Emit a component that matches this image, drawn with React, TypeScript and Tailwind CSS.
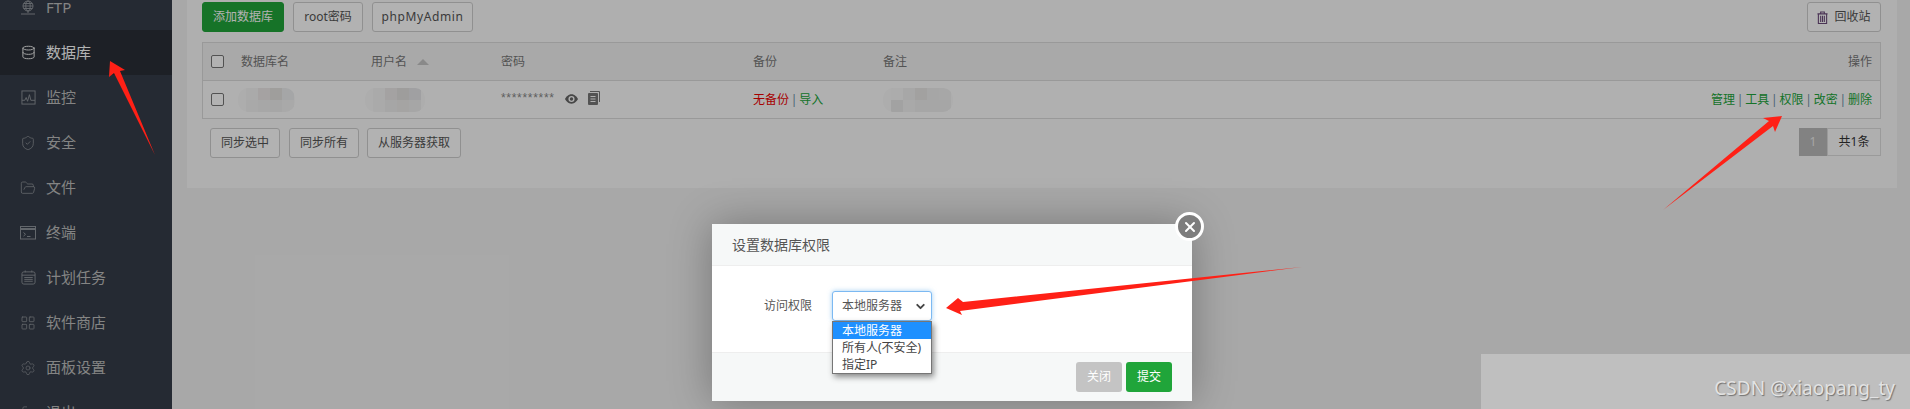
import { Database, ShieldCheck, FolderOpen, LayoutGrid, Settings, ChevronDown, X, LogOut } from "lucide-react";

function FtpIcon() {
  return (
    <svg viewBox="0 0 16 16" className="w-[16px] h-[16px]" fill="none" stroke="currentColor" strokeWidth="1">
      <circle cx="8" cy="6" r="5" />
      <ellipse cx="8" cy="6" rx="2.2" ry="5" />
      <path d="M3 6h10M3.8 3.500h8.400M3.800 8.500h8.400M8 11v2M1 14h14" />
    </svg>
  );
}
function MonitorIcon() {
  return (
    <svg viewBox="0 0 16 16" className="w-[15px] h-[15px]" fill="none" stroke="currentColor" strokeWidth="1">
      <rect x="1" y="1" width="14" height="14" />
      <path d="M1 11h3l1.500-3 1.500 4 2-7 1.500 6H15" />
    </svg>
  );
}
function TerminalIcon() {
  return (
    <svg viewBox="0 0 16 14" className="w-[16px] h-[14px]" fill="none" stroke="currentColor" strokeWidth="1">
      <rect x="0.5" y="0.5" width="15" height="12.5" />
      <path d="M1 3h14" strokeWidth="2" />
      <path d="M3.500 6.500l2 1.800-2 1.800M7 10.500h3.500" />
    </svg>
  );
}
function CalendarIcon() {
  return (
    <svg viewBox="0 0 16 16" className="w-[15px] h-[15px]" fill="none" stroke="currentColor" strokeWidth="1">
      <rect x="1" y="2" width="14" height="13" rx="2" />
      <path d="M1 5.500h14M4.500 0.500v2M11.500 0.500v2M3.500 8h9M3.500 10h9M3.500 12h9" />
    </svg>
  );
}

const nav = [
  { label: "FTP", icon: <FtpIcon /> },
  { label: "数据库", icon: <Database size={15} strokeWidth={1.6} />, active: true },
  { label: "监控", icon: <MonitorIcon /> },
  { label: "安全", icon: <ShieldCheck size={16} strokeWidth={1.2} /> },
  { label: "文件", icon: <FolderOpen size={16} strokeWidth={1.2} /> },
  { label: "终端", icon: <TerminalIcon /> },
  { label: "计划任务", icon: <CalendarIcon /> },
  { label: "软件商店", icon: <LayoutGrid size={16} strokeWidth={1.2} /> },
  { label: "面板设置", icon: <Settings size={16} strokeWidth={1} /> },
  { label: "退出", icon: <LogOut size={15} strokeWidth={1.2} /> },
];

function Btn({ children, className = "" }: { children: React.ReactNode; className?: string }) {
  return (
    <button className={`h-[30px] rounded-[3px] border border-[#cfcfcf] bg-white text-[12px] text-[#555] flex items-center justify-center ${className}`}>
      {children}
    </button>
  );
}

function Checkbox() {
  return <span className="block w-[13px] h-[13px] rounded-[2px] border border-[#767676] bg-white" />;
}

function Mosaic({ width, cells }: { width: number; cells: string[] }) {
  return (
    <div className="h-[24px] rounded-[10px] overflow-hidden bg-[#f8f8f8] blur-[0.5px] flex flex-wrap pl-[8px]" style={{ width }}>
      {cells.map((c, i) => (
        <span key={i} className="w-[12px] h-[12px]" style={{ background: c }} />
      ))}
    </div>
  );
}

function Sep() {
  return <span className="text-[#6a8ea8] mx-[1.8px]">|</span>;
}

export default function App() {
  return (
    <div
      className="relative w-[1910px] h-[409px] overflow-hidden flex bg-[#f1f1f1]"
      style={{ fontFamily: '"Noto Sans", "Noto Sans CJK SC", sans-serif' }}
    >
      {/* sidebar */}
      <aside className="w-[172px] shrink-0 h-full bg-[#363d49] overflow-hidden">
        <div className="-mt-[15px]">
          {nav.map((n) => (
            <div
              key={n.label}
              className={`h-[45px] flex items-center pl-[20px] text-[15px] ${n.active ? "bg-[#2a2f37] text-white" : "text-[#bdbdbd]"}`}
            >
              <span className={`w-[16px] flex justify-center ${n.active ? "text-[#e8e8e8]" : "text-[#8f949b]"}`}>{n.icon}</span>
              <span className="ml-[10px]">{n.label}</span>
            </div>
          ))}
        </div>
      </aside>

      {/* main */}
      <main className="flex-1 pl-[15px] pr-[13px]">
        <section className="h-[188px] bg-[#fbfbfb] pt-[2px] px-[15px] pr-[16px]">
          <div className="flex items-center h-[30px]">
            <Btn className="w-[82px] !bg-[#20a53a] !border-[#20a53a] !text-white">添加数据库</Btn>
            <Btn className="w-[70px] ml-[9px]">root密码</Btn>
            <Btn className="w-[101px] ml-[9px] tracking-[0.6px]">phpMyAdmin</Btn>
            <Btn className="w-[74px] ml-auto">
              <svg viewBox="0 0 12 14" className="w-[11px] h-[13px] mr-[6px]" fill="none" stroke="#6b4a7a" strokeWidth="1.2">
                <path d="M0.500 3h11M4 3V1h4v2M1.500 3v10.500h9V3M4 5v7M6 5v7M8 5v7" />
              </svg>
              回收站
            </Btn>
          </div>

          <div className="mt-[10px] border border-[#dcdcdc] text-[12px]">
            <div className="h-[38px] bg-[#f3f3f3] border-b border-[#dcdcdc] flex items-center text-[#777]">
              <div className="w-[38px] pl-[8px]"><Checkbox /></div>
              <div className="w-[130px]">数据库名</div>
              <div className="w-[130px] flex items-center">
                用户名
                <span className="ml-[10px] w-0 h-0 border-x-[6px] border-x-transparent border-b-[6px] border-b-[#c4c4c4]" />
              </div>
              <div className="w-[252px]">密码</div>
              <div className="w-[130px]">备份</div>
              <div className="w-[100px]">备注</div>
              <div className="flex-1 text-right pr-[8px]">操作</div>
            </div>
            <div className="h-[37px] bg-[#fdfdfd] flex items-center text-[#666]">
              <div className="w-[38px] pl-[8px]"><Checkbox /></div>
              <div className="w-[133px] -ml-[3px]">
                <Mosaic width={57} cells={["#f4f4f4", "#ece9e9", "#e4e2e0", "#eceef0", "#f2f2f2", "#f0f0f0", "#eee", "#f2f2f2"]} />
              </div>
              <div className="w-[136px] -ml-[6px]">
                <Mosaic width={60} cells={["#f4f4f4", "#ebe9e8", "#e3e1e0", "#e5e6e9", "#f4f4f4", "#eee", "#ecebea", "#eee"]} />
              </div>
              <div className="w-[252px] flex items-center">
                <span className="text-[#888] tracking-[0.7px] -mt-[3px]" style={{ fontFamily: '"Liberation Sans", sans-serif' }}>**********</span>
                <svg viewBox="0 0 14 10" className="ml-[10px] w-[13px] h-[10px] -mt-[2px]" fill="#666">
                  <path fillRule="evenodd" d="M7 0C3.500 0 1 3 0 5c1 2 3.500 5 7 5s6-3 7-5c-1-2-3.500-5-7-5zm0 8.300A3.300 3.300 0 1 1 7 1.700a3.300 3.300 0 0 1 0 6.600z" />
                  <circle cx="7" cy="5" r="1.800" />
                </svg>
                <svg viewBox="0 0 12 14" className="ml-[10px] w-[12px] h-[14px] -mt-[3px]" fill="#777">
                  <path fillRule="evenodd" d="M2 0h9a1 1 0 0 1 1 1v10h-1V1H2zM1 2h8a1 1 0 0 1 1 1v10a1 1 0 0 1-1 1H1a1 1 0 0 1-1-1V3a1 1 0 0 1 1-1zm1.500 3v1h5V5zm0 2.500v1h5v-1zm0 2.500v1h5v-1z" />
                </svg>
              </div>
              <div className="w-[130px]">
                <span className="text-[#ee0000]">无备份</span>
                <Sep />
                <span className="text-[#20a53a]">导入</span>
              </div>
              <div className="w-[100px]">
                <Mosaic width={70} cells={["#f6f6f6", "#f0f0f0", "#e9e7e6", "#eee", "#f0f0f0", "#e8e8e8", "#f3f3f3", "#eee", "#eee", "#eee", "#f0f0f0"]} />
              </div>
              <div className="flex-1 text-right pr-[8px] text-[#20a53a]">
                管理<Sep />工具<Sep />权限<Sep />改密<Sep />删除
              </div>
            </div>
          </div>

          <div className="mt-[9px] flex items-start pl-[8px]">
            <Btn className="w-[70px]">同步选中</Btn>
            <Btn className="w-[70px] ml-[9px]">同步所有</Btn>
            <Btn className="w-[94px] ml-[8px]">从服务器获取</Btn>
            <div className="ml-auto flex text-[12px] h-[28px]">
              <span className="w-[28px] bg-[#bababa] text-[#eee] flex items-center justify-center">1</span>
              <span className="w-[54px] border border-[#ddd] text-[#333] flex items-center justify-center">共1条</span>
            </div>
          </div>
        </section>
      </main>

      {/* mask */}
      <div className="absolute inset-0 bg-black/30" />

      {/* dialog */}
      <div className="absolute left-[712px] top-[224px] w-[480px] h-[177px] bg-white shadow-[0_0_40px_rgba(0,0,0,0.3)] flex flex-col">
        <div className="h-[42px] shrink-0 bg-[#f6f8f8] border-b border-[#eee] flex items-center pl-[20px] text-[14px] text-[#555]">
          设置数据库权限
        </div>
        <div className="flex-1 min-h-0 flex items-start pt-[25px] text-[12px] text-[#555]">
          <div className="w-[100px] h-[30px] text-right leading-[30px]">访问权限</div>
          <div className="ml-[20px] w-[100px] relative z-10">
            <div className="h-[30px] border border-[#7cb9f2] rounded-[3px] bg-white shadow-[0_0_5px_rgba(102,175,233,0.6)] flex items-center pl-[9px] pr-[4px] justify-between">
              本地服务器
              <ChevronDown size={13} strokeWidth={3.5} className="text-[#444]" />
            </div>
            <div className="absolute left-0 top-[30px] w-full border border-[#767676] bg-white text-[#444] leading-[17px] shadow-[2px_3px_6px_rgba(0,0,0,0.45)]">
              <div className="bg-[#1e90ff] text-white pl-[9px]">本地服务器</div>
              <div className="pl-[9px]">所有人(不安全)</div>
              <div className="pl-[9px]">指定IP</div>
            </div>
          </div>
        </div>
        <div className="h-[49px] shrink-0 bg-[#f6f8f8] border-t border-[#eee] flex items-center justify-end pr-[20px] gap-[4px] text-[12px] text-white">
          <button className="w-[46px] h-[30px] rounded-[3px] bg-[#c4c4c4]">关闭</button>
          <button className="w-[46px] h-[30px] rounded-[3px] bg-[#20a53a]">提交</button>
        </div>
        <button className="absolute -right-[12px] -top-[12px] w-[29px] h-[29px] rounded-full border-[3px] border-white bg-[#7d7d7d] flex items-center justify-center text-white">
          <X size={16} strokeWidth={3} />
        </button>
      </div>

      {/* annotation arrows */}
      <svg className="absolute left-0 top-0 w-[1910px] h-[409px] pointer-events-none" viewBox="0 0 1910 409">
        <polygon fill="#ff2016" points="155,155 120,71 125,70 110,61 109,77 114,73" />
        <polygon fill="#ff2016" points="1663,210 1769,121 1763,118 1782,116 1775,132 1773,126" />
        <polygon fill="#ff2016" points="1302,267 963,302 958,298 946,308 962,315 960,311" />
      </svg>

      {/* watermark */}
      <div className="absolute right-0 bottom-0 w-[429px] h-[55px] bg-[#bfbfbf] flex items-center justify-end pr-[15px] pt-[13px]">
        <span className="text-[19px] text-[#e2e2e2] [text-shadow:1px_1px_1px_rgba(80,80,80,0.7)]" style={{ fontFamily: '"Noto Sans", sans-serif' }}>
          CSDN @xiaopang_ty
        </span>
      </div>
    </div>
  );
}
